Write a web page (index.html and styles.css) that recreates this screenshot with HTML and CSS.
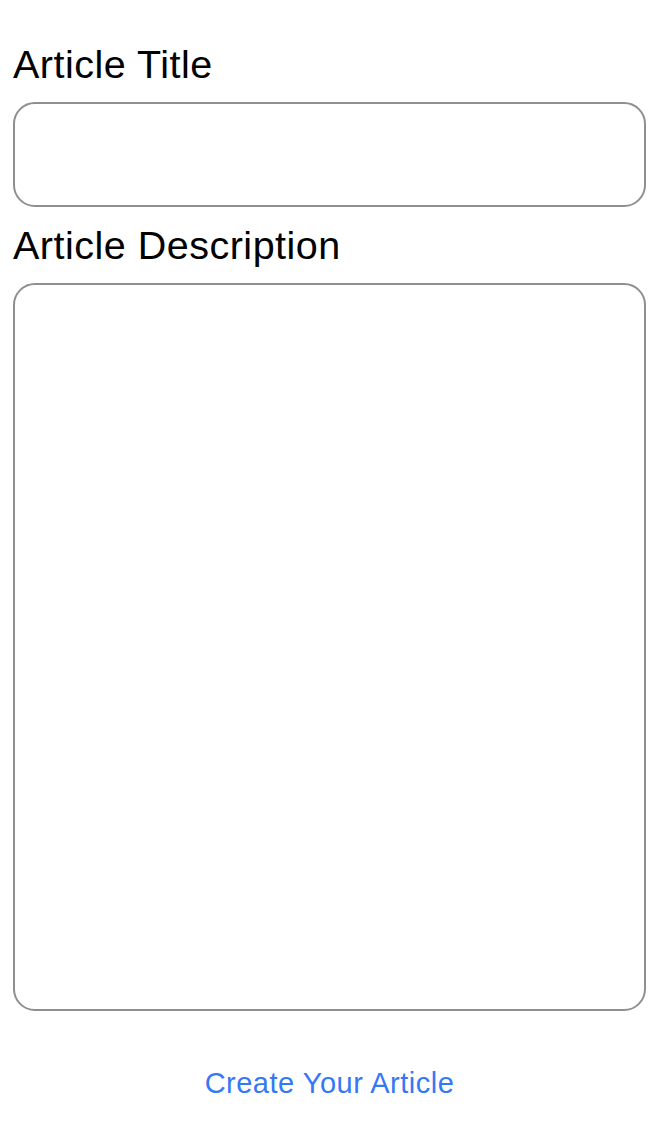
FILE: index.html
```html
<!DOCTYPE html>
<html lang="en">
<head>
<meta charset="utf-8">
<title>Create Article</title>
<link rel="stylesheet" href="styles.css">
</head>
<body>
<form class="form">
  <label class="label" for="title">Article Title</label>
  <input class="field field-title" id="title" type="text">
  <label class="label" for="desc">Article Description</label>
  <textarea class="field field-desc" id="desc"></textarea>
  <button class="submit" type="button">Create Your Article</button>
</form>
</body>
</html>
```
FILE: styles.css
```css
html, body {
  margin: 0;
  padding: 0;
  background: #ffffff;
}

body {
  font-family: "Liberation Sans", Arial, sans-serif;
  color: #000000;
}

.form {
  display: flex;
  flex-direction: column;
  padding: 26px 16px 0 13px;
}

.label {
  display: block;
  font-size: 39.5px;
  line-height: 46px;
  margin-top: 15px;
  margin-bottom: 15px;
  letter-spacing: 0.5px;
}

.field {
  box-sizing: border-box;
  width: 100%;
  border: 2px solid #8f8f8f;
  border-radius: 22px;
  background: #ffffff;
  font-family: inherit;
  font-size: 28px;
  padding: 10px 16px;
  margin: 0;
  outline: none;
  resize: none;
}

.field-title {
  height: 105px;
}

.field-desc {
  height: 728px;
}

.submit {
  align-self: center;
  margin-top: 55px;
  background: none;
  border: none;
  padding: 0;
  font-family: inherit;
  font-size: 29px;
  line-height: 34px;
  letter-spacing: 0.5px;
  color: #3478f6;
  cursor: pointer;
}
```
